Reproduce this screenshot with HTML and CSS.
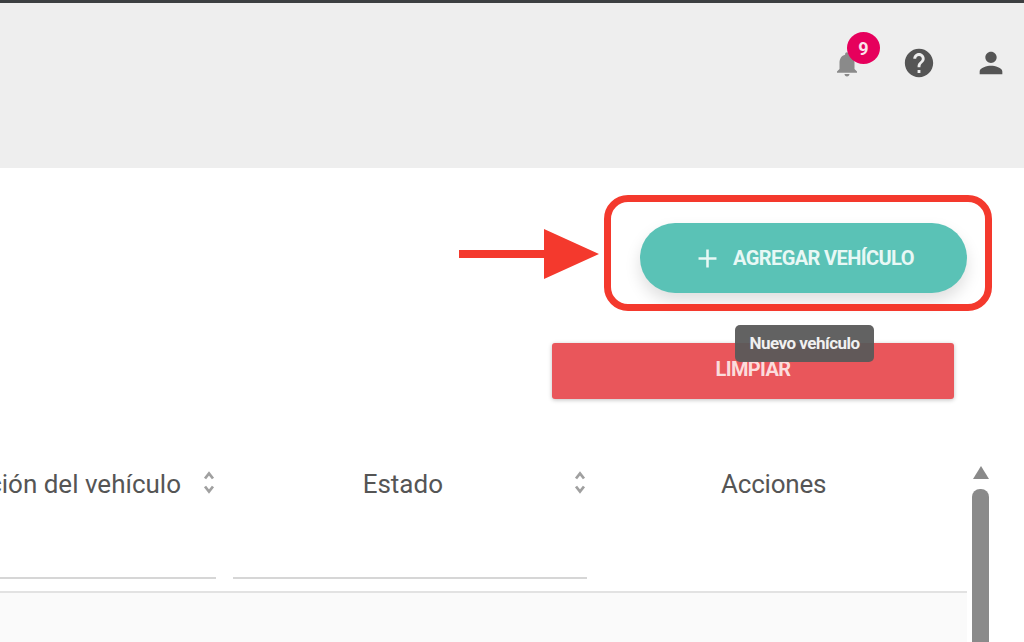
FILE: index.html
```html
<!DOCTYPE html>
<html lang="es">
<head>
  <meta charset="UTF-8" />
  <title>Vehículos</title>
  <link rel="stylesheet" href="styles.css">
</head>
<body>
  <div class="topline"></div>

  <header class="header">
    <div class="notif">
      <svg class="icon" viewBox="0 0 24 24"><path d="M12 22c1.1 0 2-.9 2-2h-4c0 1.100.9 2 2 2zm6-6v-5c0-3.070-1.640-5.640-4.500-6.320V4c0-.830-.670-1.500-1.500-1.500s-1.500.670-1.500 1.500v.680C7.630 5.360 6 7.920 6 11v5l-2 2v1h16v-1l-2-2z"/></svg>
      <span class="badge">9</span>
    </div>
    <svg class="icon icon-help" viewBox="0 0 24 24"><path d="M12 2C6.480 2 2 6.480 2 12s4.480 10 10 10 10-4.480 10-10S17.520 2 12 2zm1 17h-2v-2h2v2zm2.070-7.750l-.900.920C13.450 12.900 13 13.500 13 15h-2v-.500c0-1.100.450-2.100 1.170-2.830l1.240-1.260c.370-.360.590-.860.590-1.410 0-1.100-.900-2-2-2s-2 .900-2 2H8c0-2.210 1.790-4 4-4s4 1.790 4 4c0 .880-.360 1.680-.930 2.250z"/></svg>
    <svg class="icon icon-user" viewBox="0 0 24 24"><path d="M12 12c2.210 0 4-1.790 4-4s-1.790-4-4-4-4 1.790-4 4 1.790 4 4 4zm0 2c-2.670 0-8 1.340-8 4v2h16v-2c0-2.660-5.330-4-8-4z"/></svg>
  </header>

  <main class="main">
    <div class="actions">
      <button class="add-btn">
        <svg class="plus" viewBox="0 0 18 18"><path d="M9 0.500v17M0.500 9h17"/></svg>
        AGREGAR VEHÍCULO
      </button>
    </div>

    <div class="filters">
      <button class="clear-btn">LIMPIAR</button>
    </div>

    <div class="table-wrap">
      <div class="table">
        <div class="thead">
          <div class="th th-desc">
            <span class="th-label">Descripción del vehículo</span>
            <svg class="sort" viewBox="0 0 12 22"><path d="M2.500 7.500L6 3l3.500 4.500M2.500 14.500L6 19l3.500-4.500"/></svg>
          </div>
          <div class="th th-state">
            <span class="th-label">Estado</span>
            <svg class="sort" viewBox="0 0 12 22"><path d="M2.500 7.500L6 3l3.500 4.500M2.500 14.500L6 19l3.500-4.500"/></svg>
          </div>
          <div class="th th-actions">Acciones</div>
        </div>
        <div class="row"></div>
      </div>
      <div class="scrollbar">
        <div class="scroll-up"></div>
        <div class="scroll-thumb"></div>
      </div>
    </div>

    <!-- anotaciones sobre la captura -->
    <div class="highlight"></div>
    <svg class="arrow" viewBox="0 0 140 50"><path d="M0 21h85V0l55 25-55 25V29H0z"/></svg>
    <div class="tooltip">Nuevo vehículo</div>
  </main>
</body>
</html>
```

FILE: styles.css
```css
html, body {
  margin: 0;
  height: 100%;
  overflow: hidden;
}

body {
  font-family: Roboto, sans-serif;
  background: #fff;
  color: #555;
}

.topline {
  height: 3px;
  background: #3c3f41;
}

.header {
  height: 165px;
  background: #eeeeee;
  display: flex;
  justify-content: flex-end;
  align-items: flex-start;
  padding: 43px 16px 0 0;
  box-sizing: border-box;
  gap: 38px;
}

.icon {
  width: 34px;
  height: 34px;
  fill: #555;
  display: block;
}

.notif {
  position: relative;
  width: 34px;
  height: 34px;
}

.notif .icon {
  width: 30px;
  height: 30px;
  margin: 3px 2px;
  fill: #8a8a8a;
}

.badge {
  position: absolute;
  top: -14px;
  left: 17px;
  width: 33px;
  height: 32px;
  border-radius: 50%;
  background: #e6005c;
  color: #fbe3ec;
  font-size: 18px;
  font-weight: 700;
  display: flex;
  align-items: center;
  justify-content: center;
}

.main {
  position: relative;
  height: 474px;
  overflow: hidden;
}

.actions {
  display: flex;
  justify-content: flex-end;
  padding: 55px 57px 0 0;
}

button {
  border: none;
  font-family: inherit;
  cursor: pointer;
}

.add-btn {
  width: 327px;
  height: 70px;
  padding: 0 0 0 5px;
  border-radius: 35px;
  background: #5ac2b6;
  color: #e8f8f5;
  font-size: 20px;
  font-weight: 700;
  letter-spacing: -0.6px;
  box-shadow: 0 8px 16px rgba(0, 0, 0, 0.13);
  display: flex;
  align-items: center;
  justify-content: center;
  gap: 16px;
}

.plus {
  width: 19px;
  height: 19px;
  fill: none;
  stroke: #e8f8f5;
  stroke-width: 2.4;
}

.filters {
  display: flex;
  justify-content: flex-end;
  padding: 50px 70px 0 0;
}

.clear-btn {
  width: 402px;
  height: 56px;
  padding: 0 0 4px;
  border-radius: 3px;
  background: #e9565b;
  color: #fbdcdc;
  font-size: 20px;
  font-weight: 700;
  letter-spacing: -0.6px;
  box-shadow: 0 1px 4px rgba(0, 0, 0, 0.25);
}

.table-wrap {
  display: flex;
  margin-top: 64px;
}

.table {
  width: 967px;
}

.thead {
  display: flex;
  height: 127px;
  border-bottom: 2px solid #e2e2e2;
  box-sizing: border-box;
  margin-top: 3px;
}

.th {
  height: 113px;
  border-bottom: 2px solid #d6d6d6;
  box-sizing: border-box;
  display: flex;
  align-items: flex-start;
  font-size: 26px;
  line-height: 36px;
  white-space: nowrap;
}

.th-desc {
  width: 216px;
  justify-content: flex-end;
  overflow: hidden;
  flex: none;
}

.th-state {
  width: 354px;
  margin-left: 17px;
  flex: none;
  justify-content: flex-end;
}

.th-state .th-label {
  margin-right: 130px;
}

.th-desc .th-label {
  margin-right: 21px;
}

.th-actions {
  flex: 1;
  border-bottom: none;
  padding-left: 134px;
  letter-spacing: -0.2px;
}

.sort {
  flex: none;
  width: 14px;
  height: 25px;
  margin-top: 4px;
  fill: none;
  stroke: #a0a0a0;
  stroke-width: 2.4;
}

.row {
  height: 60px;
  background: #fafafa;
}

.scrollbar {
  margin-left: 5px;
  width: 17px;
  display: flex;
  flex-direction: column;
  align-items: center;
}

.scroll-up {
  width: 0;
  height: 0;
  margin-top: 3px;
  border-left: 8px solid transparent;
  border-right: 8px solid transparent;
  border-bottom: 13px solid #8a8a8a;
}

.scroll-thumb {
  width: 17px;
  height: 200px;
  margin-top: 10px;
  border-radius: 8px 8px 0 0;
  background: #8a8a8a;
}

.highlight {
  position: absolute;
  left: 604px;
  top: 27px;
  width: 388px;
  height: 116px;
  border: 7px solid #f4392d;
  border-radius: 24px;
  box-sizing: border-box;
}

.arrow {
  position: absolute;
  left: 459px;
  top: 61px;
  width: 140px;
  height: 50px;
  fill: #f4392d;
}

.tooltip {
  position: absolute;
  left: 735px;
  top: 157px;
  width: 139px;
  height: 37px;
  padding-bottom: 2px;
  box-sizing: border-box;
  border-radius: 5px;
  background: rgba(90, 90, 90, 0.95);
  color: #f0f0f0;
  font-size: 17px;
  font-weight: 700;
  letter-spacing: -0.5px;
  display: flex;
  align-items: center;
  justify-content: center;
}
```
